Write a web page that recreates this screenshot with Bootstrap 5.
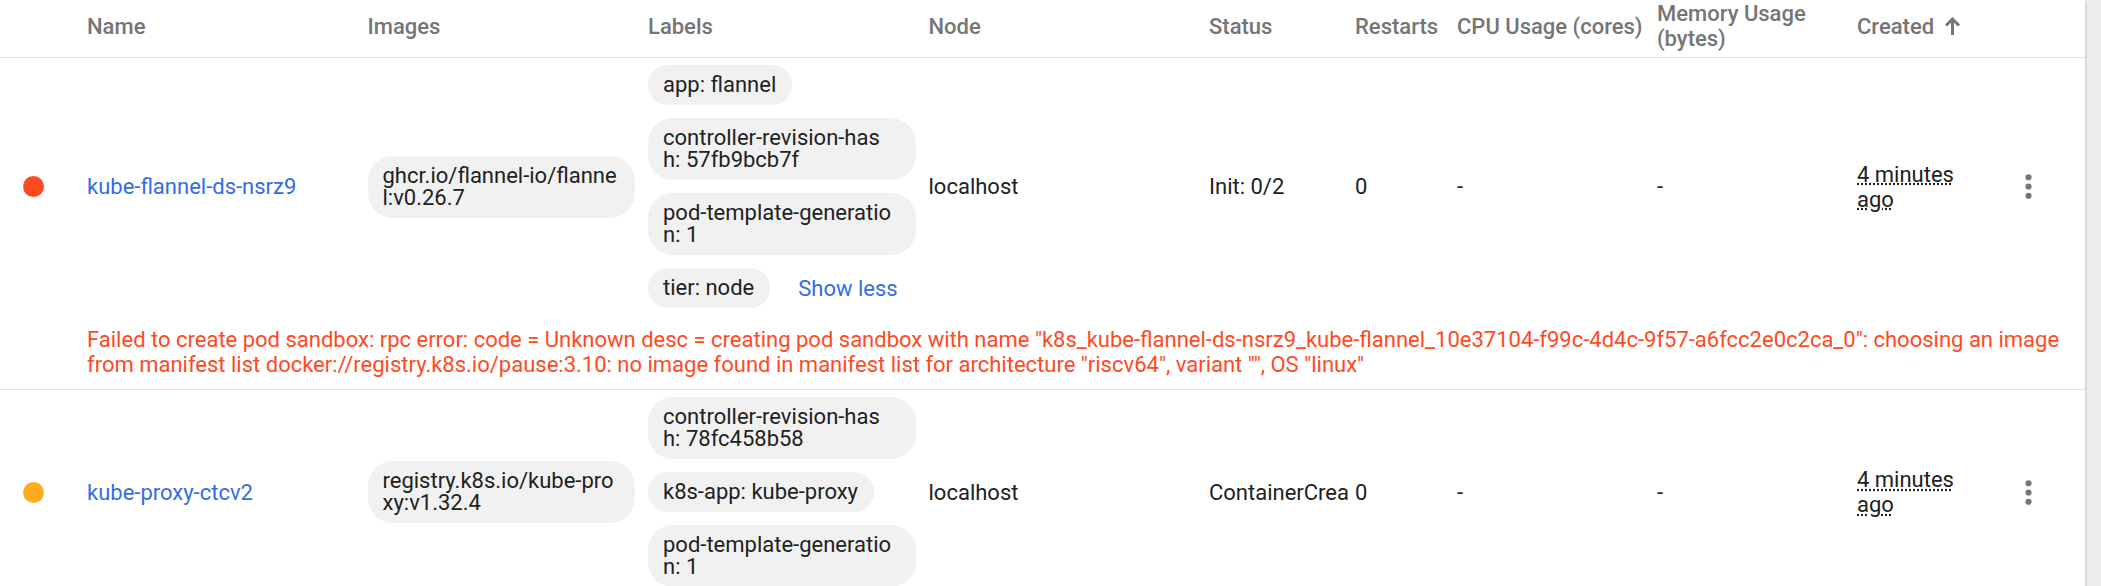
<!DOCTYPE html>
<html lang="en">
<head>
<meta charset="utf-8">
<meta name="viewport" content="width=device-width, initial-scale=1">
<title>Pods</title>
<link href="https://cdn.jsdelivr.net/npm/bootstrap@5.3.0/dist/css/bootstrap.min.css" rel="stylesheet">
<style>
  body { background: #edeef0; font-family: Roboto, "Liberation Sans", sans-serif; font-size: 22px; line-height: 25px; color: #212121; overflow: hidden; }
  .pods-card { background: #fff; margin-right: 16px; box-shadow: 0 2px 3px rgba(0,0,0,.3); overflow: hidden; }
  .pods-table { table-layout: fixed; width: 100%; }
  .pods-table th { padding: 1px 0 6px; font-weight: 500; color: #757575; vertical-align: middle; }
  .pods-table td { padding: 7px 0; vertical-align: middle; }
  .pods-table tr.line > * { border-bottom: 1px solid #e0e0e0; }
  .pods-table .message { padding: 12px 24px 12px 0; color: #ff4a1f; }
  .col-icon { width: 87px; }
  .col-status { width: 146px; }
  .col-restarts { width: 102px; }
  .col-usage { width: 200px; }
  .col-created { width: 141px; }
  .col-menu { width: 87px; }
  .pods-table .icon-cell { padding-left: 23px; }
  .pods-table .created-cell { padding-right: 12px; }
  .state { display: block; width: 21px; height: 21px; border-radius: 50%; }
  .state-error { background: #ff4a1f; }
  .state-pending { background: #ffad20; }
  .chips { display: flex; flex-wrap: wrap; align-items: center; gap: 13px 28px; margin-right: 13px; }
  .chip { background: #f1f1f1; border-radius: 25px; padding: 9px 16px 9px 15px; line-height: 22px; max-width: 100%; word-break: break-all; }
  .pods-table a, .toggle { color: #326de6; text-decoration: none; }
  .toggle { background: none; border: 0; padding: 0; }
  .clip { overflow: hidden; white-space: nowrap; margin-right: 7px; }
  .age { text-decoration: underline dotted; cursor: help; }
  .sort { background: none; border: 0; padding: 0; color: inherit; font-weight: inherit; display: flex; align-items: center; gap: 11px; }
  .menu { background: none; border: 0; padding: 0; display: block; margin-left: 12px; color: #757575; }
  .menu svg, .sort svg { display: block; }
</style>
</head>
<body>
<main class="pods-card">
<table class="pods-table">
  <colgroup>
    <col class="col-icon"><col><col><col><col>
    <col class="col-status"><col class="col-restarts"><col class="col-usage"><col class="col-usage">
    <col class="col-created"><col class="col-menu">
  </colgroup>
  <thead>
    <tr class="line">
      <th></th><th>Name</th><th>Images</th><th>Labels</th><th>Node</th><th>Status</th><th>Restarts</th>
      <th class="text-nowrap">CPU Usage (cores)</th><th>Memory Usage (bytes)</th>
      <th><button class="sort" type="button">Created
        <svg width="15" height="18" viewBox="0 0 15 18" fill="none" stroke="currentColor" stroke-width="3"><path d="M7.500 18V2.500M1 8.500L7.500 2L14 8.500"/></svg></button></th>
      <th></th>
    </tr>
  </thead>
  <tbody>
    <tr>
      <td class="icon-cell"><span class="state state-error"></span></td>
      <td><a href="#flannel">kube-flannel-ds-nsrz9</a></td>
      <td><div class="chips"><span class="chip">ghcr.io/flannel-io/flannel:v0.26.7</span></div></td>
      <td><div class="chips">
        <span class="chip">app:&nbsp;flannel</span>
        <span class="chip">controller-revision-hash:&nbsp;57fb9bcb7f</span>
        <span class="chip">pod-template-generation:&nbsp;1</span>
        <span class="chip">tier:&nbsp;node</span>
        <button class="toggle" type="button">Show less</button>
      </div></td>
      <td>localhost</td>
      <td><div class="clip">Init: 0/2</div></td>
      <td>0</td><td>-</td><td>-</td>
      <td class="created-cell"><span class="age">4 minutes ago</span></td>
      <td><button class="menu" type="button" aria-label="Pod actions"><svg width="37" height="37" viewBox="0 0 24 24" fill="currentColor"><circle cx="12" cy="6" r="2"/><circle cx="12" cy="12" r="2"/><circle cx="12" cy="18" r="2"/></svg></button></td>
    </tr>
    <tr class="line">
      <td></td>
      <td class="message" colspan="10">Failed to create pod sandbox: rpc error: code = Unknown desc = creating pod sandbox with name "k8s_kube-flannel-ds-nsrz9_kube-flannel_10e37104-f99c-4d4c-9f57-a6fcc2e0c2ca_0": choosing an image from manifest list docker://registry.k8s.io/pause:3.10: no image found in manifest list for architecture "riscv64", variant "", OS "linux"</td>
    </tr>
    <tr class="line">
      <td class="icon-cell"><span class="state state-pending"></span></td>
      <td><a href="#proxy">kube-proxy-ctcv2</a></td>
      <td><div class="chips"><span class="chip">registry.k8s.io/kube-proxy:v1.32.4</span></div></td>
      <td><div class="chips">
        <span class="chip">controller-revision-hash:&nbsp;78fc458b58</span>
        <span class="chip">k8s-app:&nbsp;kube-proxy</span>
        <span class="chip">pod-template-generation:&nbsp;1</span>
      </div></td>
      <td>localhost</td>
      <td><div class="clip">ContainerCreating</div></td>
      <td>0</td><td>-</td><td>-</td>
      <td class="created-cell"><span class="age">4 minutes ago</span></td>
      <td><button class="menu" type="button" aria-label="Pod actions"><svg width="37" height="37" viewBox="0 0 24 24" fill="currentColor"><circle cx="12" cy="6" r="2"/><circle cx="12" cy="12" r="2"/><circle cx="12" cy="18" r="2"/></svg></button></td>
    </tr>
  </tbody>
</table>
</main>
<script src="https://cdn.jsdelivr.net/npm/bootstrap@5.3.0/dist/js/bootstrap.bundle.min.js"></script>
</body>
</html>
